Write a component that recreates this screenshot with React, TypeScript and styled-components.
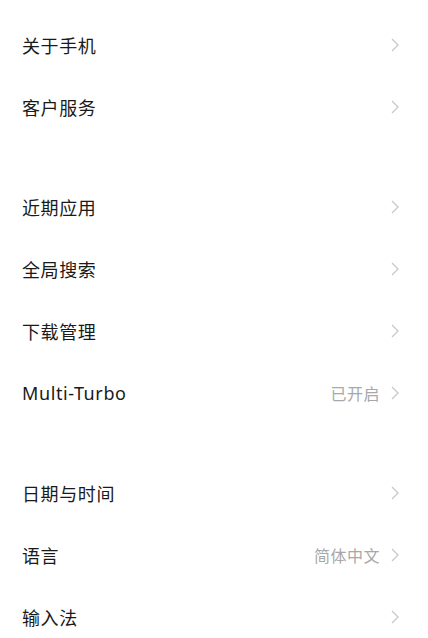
import React from 'react'
import styled, { createGlobalStyle } from 'styled-components'

const GlobalStyle = createGlobalStyle`
  html, body {
    margin: 0;
    padding: 0;
    background: #ffffff;
  }
  body {
    font-family: 'Noto Sans', 'Noto Sans CJK SC', sans-serif;
    -webkit-font-smoothing: antialiased;
  }
`

const Page = styled.div`
  width: 428px;
  height: 638px;
  overflow: hidden;
  padding-top: 14px;
  box-sizing: border-box;
  display: flex;
  flex-direction: column;
  gap: 38px;
`

const Section = styled.div`
  display: flex;
  flex-direction: column;
`

const Row = styled.div`
  height: 62px;
  display: flex;
  align-items: center;
  padding: 0 28px 0 22px;
`

const Label = styled.span`
  flex: 1;
  font-size: 18px;
  color: #1a1a1a;
  letter-spacing: 0.6px;
`

const Value = styled.span`
  font-size: 16px;
  color: #a8a8a8;
  letter-spacing: 0.5px;
  margin-right: 10px;
`

const Chevron = () => (
  <svg width='10' height='16' viewBox='0 0 10 16'>
    <path d='M2 2 L8 8 L2 14' fill='none' stroke='#c8c8c8' strokeWidth='1.3' />
  </svg>
)

type Item = { label: string; value?: string }

const sections: Item[][] = [
  [{ label: '关于手机' }, { label: '客户服务' }],
  [
    { label: '近期应用' },
    { label: '全局搜索' },
    { label: '下载管理' },
    { label: 'Multi-Turbo', value: '已开启' },
  ],
  [{ label: '日期与时间' }, { label: '语言', value: '简体中文' }, { label: '输入法' }],
]

const App = () => {
  return (
    <>
      <GlobalStyle />
      <Page>
        {sections.map((items, i) => (
          <Section key={i}>
            {items.map((item) => (
              <Row key={item.label}>
                <Label>{item.label}</Label>
                {item.value && <Value>{item.value}</Value>}
                <Chevron />
              </Row>
            ))}
          </Section>
        ))}
      </Page>
    </>
  )
}

export default App
